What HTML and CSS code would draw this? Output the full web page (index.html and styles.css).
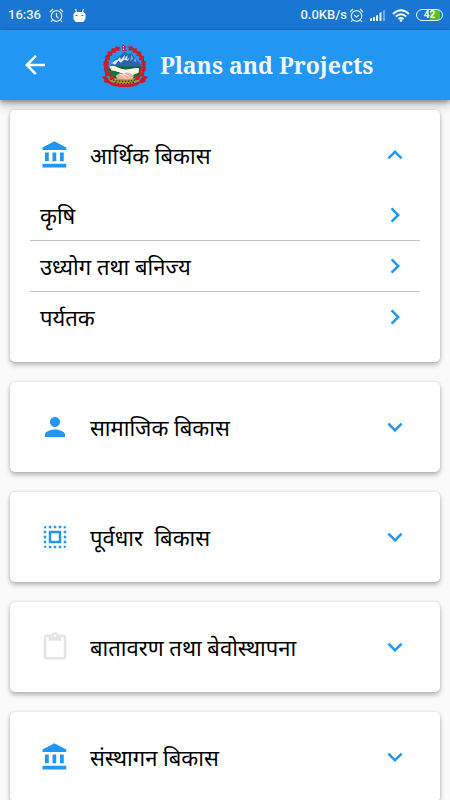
FILE: index.html
```html
<!DOCTYPE html>
<html lang="ne">
<head>
<meta charset="utf-8">
<meta name="viewport" content="width=device-width, initial-scale=1">
<title>Plans and Projects</title>
<link rel="stylesheet" href="styles.css">
</head>
<body>
<svg class="sprite" aria-hidden="true">
  <symbol id="bank" viewBox="0 0 24 24"><path d="M4 10v7h3v-7H4zm6 0v7h3v-7h-3zM2 22h19v-3H2v3zm14-12v7h3v-7h-3zm-4.500-9L2 6v2h19V6l-9.500-5z"/></symbol>
  <symbol id="person" viewBox="0 0 24 24"><path d="M12 12c2.210 0 4-1.790 4-4s-1.790-4-4-4-4 1.790-4 4 1.790 4 4 4zm0 2c-2.670 0-8 1.340-8 4v2h16v-2c0-2.660-5.330-4-8-4z"/></symbol>
  <symbol id="select" viewBox="0 0 24 24"><path d="M3 5h2V3c-1.100 0-2 .9-2 2zm0 8h2v-2H3v2zm4 8h2v-2H7v2zM3 9h2V7H3v2zm10-6h-2v2h2V3zm6 0v2h2c0-1.100-.9-2-2-2zM5 21v-2H3c0 1.100.9 2 2 2zm-2-4h2v-2H3v2zM9 3H7v2h2V3zm2 18h2v-2h-2v2zm8-8h2v-2h-2v2zm0 8c1.100 0 2-.9 2-2h-2v2zm0-12h2V7h-2v2zm0 8h2v-2h-2v2zm-4 4h2v-2h-2v2zm0-16h2V3h-2v2zM7 17h10V7H7v10zm2-8h6v6H9V9z"/></symbol>
  <symbol id="clipboard" viewBox="0 0 24 24"><path d="M19 2h-4.180C14.400.84 13.300 0 12 0S9.600.84 9.180 2H5c-1.100 0-2 .9-2 2v16c0 1.100.9 2 2 2h14c1.100 0 2-.9 2-2V4c0-1.100-.9-2-2-2zm-7 0c.55 0 1 .45 1 1s-.45 1-1 1-1-.45-1-1 .45-1 1-1zm7 18H5V4h2v3h10V4h2v16z"/></symbol>
  <symbol id="less" viewBox="0 0 24 24"><path d="M12 8l-6 6 1.410 1.410L12 10.830l4.590 4.580L18 14z"/></symbol>
  <symbol id="more" viewBox="0 0 24 24"><path d="M16.590 8.590L12 13.170 7.410 8.590 6 10l6 6 6-6z"/></symbol>
  <symbol id="next" viewBox="0 0 24 24"><path d="M10 6L8.590 7.410 13.170 12l-4.580 4.590L10 18l6-6z"/></symbol>
  <symbol id="flower" viewBox="-8 -8 16 16"><circle cx="-3" cy="-3" r="4"/><circle cx="4" cy="-2" r="4"/><circle cx="-3" cy="4" r="4"/><circle cx="3" cy="4" r="4"/></symbol>
</svg>

<div class="app">
  <div class="status">
    <div class="status-group left">
      <span>16:36</span>
      <svg class="glyph alarm" viewBox="0 0 15 15"><circle cx="7.500" cy="8" r="5.300"/><path d="M7.500 5v3.500l2 1.500M1 4L4 1M14 4l-3-3M3.500 12L2 14M11.500 12l1.500 2"/></svg>
      <svg class="glyph robot" viewBox="0 0 14 15"><path class="fill" d="M3 4h8l2 2v5l-2 3H3l-2-3V6z"/><path d="M3 1l1 3M11 1l-1 3"/><path class="eyes" d="M3 7.500h2M9 7.500h2"/></svg>
    </div>
    <div class="status-group right">
      <span class="speed">0.0KB/s</span>
      <svg class="glyph alarm" viewBox="0 0 15 15"><circle cx="7.500" cy="8" r="5.300"/><path d="M5 7l2.500 2L10 7M1 4L4 1M14 4l-3-3M3.500 12L2 14M11.500 12l1.500 2"/></svg>
      <svg class="signal" viewBox="0 0 16 12"><path d="M0 12V9.500L2 9v3zM3 12V8.500L5 8v4zM6 12V6.500L8 6v6z"/><path d="M9.500 12V4l2-1v9z"/><path class="dim" d="M13 12V1.500L15 1v11z"/></svg>
      <svg class="wifi" viewBox="0 0 18 13"><path d="M1 5q8-7.500 16 0M3.800 7.600q5.200-4.800 10.400 0M6.500 10q2.500-2 5 0"/><circle cx="9" cy="11.500" r="1.300"/></svg>
      <span class="battery">42</span>
    </div>
  </div>

  <header class="bar">
    <button class="back" type="button" aria-label="Back">
      <svg viewBox="0 0 24 24"><path d="M20 11H7.830l5.590-5.590L12 4l-8 8 8 8 1.410-1.410L7.830 13H20v-2z"/></svg>
    </button>
    <svg class="emblem" viewBox="18 15 144 129" aria-hidden="true">
      <path fill="#2866ac" d="M45 88L54 67l16-12 18-17 12 8 9-4 12 17 12 10 8 18-10 17H50z"/>
      <path fill="#dbeaf7" d="M45 77l14-12 8-3 8-8 3 8 11-14 1 10 8-10-2 13 8-5-6 9-11-3-9 9-8-6-10 12-9-4z"/>
      <path fill="#7aa7ce" d="M87 45l6 10-5 8zM109 46l6 13-9 7zM121 58l4 12-10-4z"/>
      <path fill="#1a6530" d="M40 88l30-8 29 3 39-2-1 26-19 11H60L40 105z"/>
      <path fill="#f4f7ee" d="M43 83q12-7 24 2 14 9 39 5 16-4 26-2l-1 13-20 8-21-2-20-8-20-3z"/>
      <path fill="#1c7538" d="M43 96q15-5 26 5l-8 12-17-8z"/>
      <path fill="#edb6a0" d="M62 111l11-8 13 1 9-4 13 4 9 6-4 9-22 5-23-4z"/>
      <path fill="none" stroke="#ffe0d0" stroke-width="3" d="M75 106l17 9M84 105l16 5"/>
      <path fill="#b59a32" d="M43 114q20 7 36 6 24 5 52-7l4 9-16 10q-31 11-62 0l-18-10z"/>
      <path fill="none" stroke="#34351d" stroke-width="4" stroke-dasharray="5 4" d="M45 120q42 14 86 0M59 130q29 9 59-1"/>
      <path fill="#cf1626" d="M20 113l13-2 7 9 6 8q40 17 86 0l7-11 8-7 12 4-8 8 1 7-18 4-7 6q-38 12-78 0l-9-6-14-4 3-7z"/>
      <path fill="none" stroke="#184f32" stroke-width="5" d="M35 111Q17 47 69 28M142 111q20-61-38-84"/>
      <g fill="#d8182b">
        <use href="#flower" x="60" y="21" width="15" height="15"/><use href="#flower" x="48" y="26" width="16" height="16"/>
        <use href="#flower" x="36" y="35" width="17" height="17"/><use href="#flower" x="29" y="48" width="17" height="17"/>
        <use href="#flower" x="24" y="64" width="18" height="18"/><use href="#flower" x="25" y="79" width="17" height="17"/>
        <use href="#flower" x="29" y="94" width="18" height="18"/><use href="#flower" x="42" y="106" width="16" height="16"/>
        <use href="#flower" x="99" y="20" width="15" height="15"/><use href="#flower" x="111" y="26" width="16" height="16"/>
        <use href="#flower" x="123" y="35" width="17" height="17"/><use href="#flower" x="131" y="48" width="17" height="17"/>
        <use href="#flower" x="137" y="64" width="17" height="17"/><use href="#flower" x="135" y="80" width="18" height="18"/>
        <use href="#flower" x="130" y="95" width="18" height="18"/><use href="#flower" x="119" y="107" width="16" height="16"/>
      </g>
      <path fill="#d51f3b" d="M82 16l14 9-7 1 8 9H82z"/>
      <path fill="#fff" d="M84 22h3v3h-3zM84 29h3v3h-3z"/>
    </svg>
    <h1>Plans and Projects</h1>
  </header>

  <main class="list">
    <section class="card">
      <button class="head" type="button" aria-expanded="true"><svg class="icon"><use href="#bank"/></svg><span class="label">आर्थिक बिकास</span><svg class="icon"><use href="#less"/></svg></button>
      <ul class="rows">
        <li><a href="#"><span class="label">कृषि</span><svg class="icon"><use href="#next"/></svg></a></li>
        <li><a href="#"><span class="label">उध्योग तथा बनिज्य</span><svg class="icon"><use href="#next"/></svg></a></li>
        <li><a href="#"><span class="label">पर्यतक</span><svg class="icon"><use href="#next"/></svg></a></li>
      </ul>
    </section>
    <section class="card">
      <button class="head" type="button" aria-expanded="false"><svg class="icon"><use href="#person"/></svg><span class="label">सामाजिक बिकास</span><svg class="icon"><use href="#more"/></svg></button>
    </section>
    <section class="card">
      <button class="head" type="button" aria-expanded="false"><svg class="icon"><use href="#select"/></svg><span class="label">पूर्वधार  बिकास</span><svg class="icon"><use href="#more"/></svg></button>
    </section>
    <section class="card">
      <button class="head" type="button" aria-expanded="false"><svg class="icon muted"><use href="#clipboard"/></svg><span class="label">बातावरण तथा बेवोस्थापना</span><svg class="icon"><use href="#more"/></svg></button>
    </section>
    <section class="card">
      <button class="head" type="button" aria-expanded="false"><svg class="icon"><use href="#bank"/></svg><span class="label">संस्थागन बिकास</span><svg class="icon"><use href="#more"/></svg></button>
    </section>
  </main>
</div>
</body>
</html>
```
FILE: styles.css
```css
* {
  box-sizing: border-box;
}

body {
  margin: 0;
  background: #fafafa;
  color: #000;
  font-family: "Noto Sans", "Noto Sans Devanagari", sans-serif;
}

.sprite {
  position: absolute;
  width: 0;
  height: 0;
}

.app {
  display: flex;
  flex-direction: column;
  height: 100vh;
}

.status {
  display: flex;
  flex: none;
  align-items: center;
  justify-content: space-between;
  height: 30px;
  padding: 0 7px 0 8px;
  background: #1976d2;
  color: #e8f1fa;
  font: 500 13px/16px Roboto, sans-serif;
}

.status-group {
  display: flex;
  align-items: center;
}

.left {
  gap: 8px;
}

.right {
  gap: 6px;
}

.speed {
  margin-right: -4px;
}

.glyph {
  width: 15px;
  height: 15px;
  fill: none;
  stroke: #dceafa;
  stroke-width: 1.2;
}

.robot .fill {
  fill: #fff;
  stroke: none;
}

.robot .eyes {
  stroke: #1976d2;
}

.signal {
  width: 16px;
  height: 12px;
  fill: #e8f1fa;
}

.signal .dim {
  fill: #71a9e2;
}

.wifi {
  width: 18px;
  height: 13px;
  fill: #fff;
}

.wifi path {
  fill: none;
  stroke: #fff;
  stroke-width: 1.8;
}

.battery {
  width: 27px;
  height: 12px;
  border: 1px solid #e8f1fa;
  border-radius: 6px;
  background: linear-gradient(90deg, #1976d2 0 50%, #55c51c 50% 90%, #1976d2 90%);
  color: #fff;
  font-size: 10px;
  font-weight: 700;
  line-height: 10px;
  text-align: center;
}

.bar {
  display: flex;
  flex: none;
  align-items: center;
  height: 70px;
  padding-left: 20px;
  background: #2196f3;
  box-shadow: 0 2px 4px rgba(0, 0, 0, 0.3), 0 5px 10px rgba(0, 0, 0, 0.25);
}

.back {
  width: 30px;
  height: 30px;
  padding: 0;
  border: 0;
  background: none;
}

.back svg {
  display: block;
  width: 30px;
  height: 30px;
  fill: #fff;
}

.emblem {
  width: 48px;
  height: 43px;
  margin-left: 51px;
}

h1 {
  margin: 0 0 0 11px;
  color: #f2f7fc;
  font: 700 23px/32px "Droid Serif", "Noto Serif", "Liberation Serif", serif;
  white-space: nowrap;
}

.list {
  display: flex;
  flex: 1;
  flex-direction: column;
  gap: 20px;
  min-height: 0;
  padding: 10px;
  overflow-y: auto;
  scrollbar-width: none;
}

.card {
  flex: none;
  padding: 20px;
  border-radius: 5px;
  background: #fff;
  box-shadow: 0 3px 5px rgba(0, 0, 0, 0.26), 0 0 3px rgba(0, 0, 0, 0.14);
}

.head,
.rows a {
  display: flex;
  align-items: center;
  width: 100%;
  height: 50px;
  padding: 0 10px;
  border: 0;
  background: none;
  color: inherit;
  font: inherit;
  font-size: 22px;
  line-height: 32px;
  text-align: left;
  text-decoration: none;
}

.head {
  gap: 20px;
}

.label {
  flex: 1;
  white-space: pre;
}

.icon {
  flex: none;
  width: 30px;
  height: 30px;
  fill: #2196f3;
}

.muted {
  fill: #e4e4e4;
}

.rows {
  margin: 10px 0 0;
  padding: 0;
  list-style: none;
}

.rows li + li {
  border-top: 1px solid #c4c4c4;
}
```
